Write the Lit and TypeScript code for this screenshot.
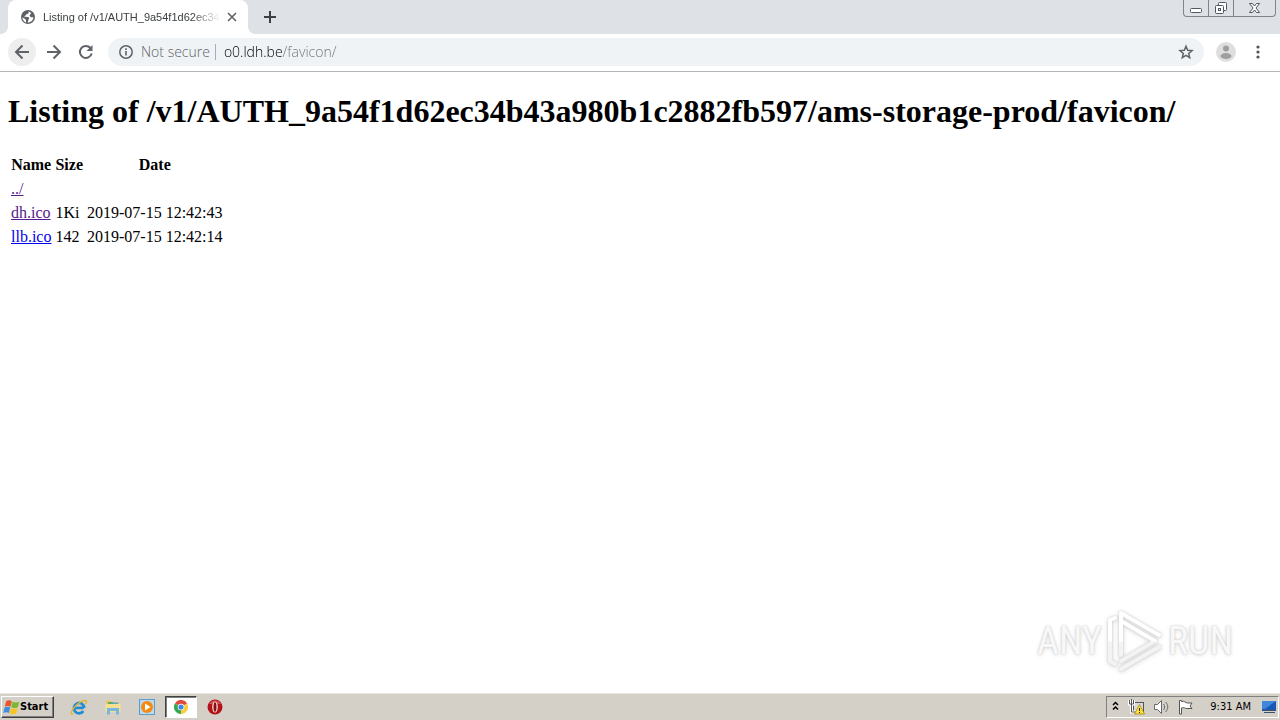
import { LitElement, html, css, svg } from "lit";
import { customElement } from "lit/decorators.js";

interface Entry {
  name: string;
  size: string;
  date: string;
  visited: boolean;
}

const PATH = "/v1/AUTH_9a54f1d62ec34b43a980b1c2882fb597/ams-storage-prod/favicon/";

const ENTRIES: Entry[] = [
  { name: "../", size: "", date: "", visited: true },
  { name: "dh.ico", size: "1Ki", date: "2019-07-15 12:42:43", visited: true },
  { name: "llb.ico", size: "142", date: "2019-07-15 12:42:14", visited: false },
];

@customElement("browser-tabs")
class BrowserTabs extends LitElement {
  static styles = css`
    :host { display: flex; align-items: stretch; height: 34px; background: #dee1e6; font-family: "Liberation Sans", sans-serif; }
    button { border: 0; background: none; padding: 0; margin: 0; color: inherit; }
    svg { display: block; }
    .tab { position: relative; display: flex; align-items: center; width: 240px; box-sizing: border-box; padding: 0 8px 0 12px; margin-left: 8px; background: #fff; border-radius: 8px 8px 0 0; }
    .tab::before, .tab::after { content: ""; position: absolute; bottom: 0; width: 8px; height: 8px; }
    .tab::before { left: -8px; background: radial-gradient(circle at 0 0, transparent 8px, #fff 8px); }
    .tab::after { right: -8px; background: radial-gradient(circle at 100% 0, transparent 8px, #fff 8px); }
    .title { flex: 1; overflow: hidden; white-space: nowrap; margin: 0 4px 0 7px; font-size: 11px; line-height: 16px; color: #3c4043; mask-image: linear-gradient(90deg, #000 calc(100% - 28px), transparent); }
    .close, .add { display: grid; place-items: center; width: 16px; height: 16px; }
    .add { align-self: center; margin-left: 14px; }
    .caption { display: flex; margin-left: auto; margin-right: 4px; height: 17px; box-sizing: border-box; border: 1px solid #80858d; border-top: 0; border-radius: 0 0 4px 4px; }
    .caption button { display: grid; place-items: center; width: 25px; border-right: 1px solid #80858d; }
    .caption button:last-child { width: 41px; border: 0; }
  `;
  render() {
    return html`
      <div class="tab">
        <svg width="16" height="16" viewBox="0 0 16 16"><circle cx="8" cy="8" r="7" fill="#5f6368" /><path d="M8.500 2.500C9.200 4 8 5.200 6.500 5.300c-.800 1.200-1.900 1.900-2.300 2.400l4 .3c1.200.6 1 1.800.3 2.500l-.8 3c3.200-.2 5.700-2.400 5.700-5.300h-2.700l-1.200-2 1.700-1.900C10.500 3.300 9.500 2.700 8.500 2.500zM2.300 8.500c.2 2.500 1.700 4.200 3.700 4.900V11L4.500 9.500z" fill="#fff" /></svg>
        <span class="title">Listing of ${PATH}</span>
        <button class="close" aria-label="Close tab"><svg width="10" height="10" viewBox="0 0 10 10"><path d="M1 1l8 8M9 1L1 9" stroke="#5f6368" stroke-width="1.600" /></svg></button>
      </div>
      <button class="add" aria-label="New tab"><svg width="12" height="12" viewBox="0 0 12 12"><path d="M6 0v12M0 6h12" stroke="#3c4043" stroke-width="2" /></svg></button>
      <div class="caption">
        <button aria-label="Minimize"><svg width="25" height="16" viewBox="0 0 25 16"><rect x="6.500" y="8.500" width="11" height="4" rx="1" fill="#fff" stroke="#535761" /></svg></button>
        <button aria-label="Restore"><svg width="25" height="16" viewBox="0 0 25 16" fill="#fff" stroke="#535761"><rect x="9.500" y="2.500" width="8" height="8" rx="1" /><rect x="6.500" y="5.500" width="8" height="8" rx="1" /><rect x="9.500" y="8.500" width="2" height="2" /></svg></button>
        <button aria-label="Close"><svg width="41" height="16" viewBox="0 0 41 16"><path d="M15.500 3.500h3l2 2.500 2-2.500h3l-3.500 4.500 3.500 4.500h-3l-2-2.500-2 2.500h-3l3.500-4.500z" fill="#fff" stroke="#535761" /></svg></button>
      </div>`;
  }
}

@customElement("browser-toolbar")
class BrowserToolbar extends LitElement {
  static styles = css`
    :host { display: flex; align-items: center; height: 36px; padding: 0 8px 1px; background: #fff; border-bottom: 1px solid #b3b5b6; font-family: "Open Sans", sans-serif; }
    button { display: grid; place-items: center; border: 0; background: none; padding: 0; width: 28px; height: 28px; margin-right: 4px; border-radius: 50%; }
    .back { background: #eeeeee; }
    .omnibox { flex: 1; display: flex; align-items: center; height: 28px; margin: 0 8px 0 4px; padding-left: 10px; border-radius: 14px; background: #f0f3f5; font-size: 14px; color: #5f6368; }
    .status { font-weight: 300; margin-left: 7px; padding-right: 5px; border-right: 1px solid #a9acb0; line-height: 16px; }
    input { flex: 1; min-width: 0; border: 0; outline: 0; padding: 0 0 0 8px; font: inherit; font-weight: 300; line-height: 20px; color: transparent; background: linear-gradient(90deg, #000 66px, #6d7175 66px) text; -webkit-background-clip: text; }
    .star { margin: 0 4px 0 0; }
    .more { margin: 0; }
    .profile { margin-right: 4px; }
  `;
  render() {
    return html`
      <button class="back" aria-label="Back"><svg width="16" height="16" viewBox="0 0 16 16" fill="none" stroke="#5f6368" stroke-width="2"><path d="M15 8H2M8.500 1.500L2 8l6.500 6.500" /></svg></button>
      <button aria-label="Forward"><svg width="16" height="16" viewBox="0 0 16 16" fill="none" stroke="#5f6368" stroke-width="2"><path d="M1 8h13M7.500 1.500L14 8l-6.500 6.500" /></svg></button>
      <button aria-label="Reload"><svg width="16" height="16" viewBox="0 0 16 16"><path d="M13.700 9.500A6 6 0 1 1 12.300 3.800" fill="none" stroke="#5f6368" stroke-width="2" /><path d="M14.500 1v6h-6z" fill="#5f6368" /></svg></button>
      <div class="omnibox">
        <svg width="16" height="16" viewBox="0 0 16 16"><circle cx="8" cy="8" r="6.200" fill="none" stroke="#5f6368" stroke-width="1.500" /><path d="M8 7v4.500M8 4.300v1.600" stroke="#5f6368" stroke-width="1.600" /></svg>
        <span class="status">Not secure</span>
        <input aria-label="Address" value="o0.ldh.be/favicon/" />
        <button class="star" aria-label="Bookmark"><svg width="16" height="16" viewBox="0 0 16 16"><path d="M8 2.200l1.700 4 4.300.400-3.300 2.800 1 4.200L8 11.400l-3.700 2.200 1-4.200L2 6.600l4.300-.400z" fill="none" stroke="#5f6368" stroke-width="1.500" /></svg></button>
      </div>
      <button class="profile" aria-label="Profile"><svg width="20" height="20" viewBox="0 0 20 20"><circle cx="10" cy="10" r="10" fill="#dedede" /><circle cx="10" cy="6.500" r="3" fill="#9e9e9e" /><ellipse cx="10" cy="14" rx="5.500" ry="3" fill="#9e9e9e" /></svg></button>
      <button class="more" aria-label="Menu"><svg width="4" height="14" viewBox="0 0 4 14" fill="#505357"><circle cx="2" cy="2" r="1.600" /><circle cx="2" cy="7" r="1.600" /><circle cx="2" cy="12" r="1.600" /></svg></button>`;
  }
}

@customElement("listing-page")
class ListingPage extends LitElement {
  static styles = css`
    :host { display: block; position: relative; padding: 0 8px; background: #fff; color: #000; font: 16px/20px "Liberation Serif", serif; }
    h1 { margin: 21px 0 23px; font-size: 32px; line-height: 36px; white-space: nowrap; }
    table { border-spacing: 2px; }
    th, td { padding: 1px; height: 20px; }
    td.size { text-align: left; }
    td.date { text-align: right; }
    a { color: #0000ee; }
    a.visited { color: #551a8b; }
    .watermark { position: absolute; right: 47px; bottom: 20px; display: flex; align-items: center; gap: 5px; font: 38px/64px "Roboto Condensed", "Liberation Sans Narrow", sans-serif; color: #f8f8f8; text-shadow: 0 0 2px #c8c8c8, 0 1px 4px #d8d8d8; }
    .play { filter: drop-shadow(0 0 1px #cccccc) drop-shadow(0 1px 2px #dcdcdc); }
  `;
  render() {
    return html`
      <h1>Listing of ${PATH}</h1>
      <table>
        <thead><tr><th>Name</th><th>Size</th><th>Date</th></tr></thead>
        <tbody>
          ${ENTRIES.map((e) => html`<tr>
            <td><a class=${e.visited ? "visited" : "fresh"} href="#">${e.name}</a></td>
            <td class="size">${e.size}</td>
            <td class="date">${e.date}</td>
          </tr>`)}
        </tbody>
      </table>
      <div class="watermark">
        <span>ANY</span>
        <svg class="play" width="56" height="64" viewBox="0 0 56 64" fill="none" stroke-width="4" stroke-linejoin="round" stroke-linecap="round">
          <defs><linearGradient id="fade" gradientUnits="userSpaceOnUse" x1="0" y1="0" x2="0" y2="64"><stop offset=".5" stop-color="#fff" /><stop offset=".52" stop-color="#f3f3f3" /></linearGradient></defs>
          <path stroke="url(#fade)" d="M8 9L3 11v41l5 3M14 46V4l38 22M14 12l34 20M14 52l34-20M14 60l38-22" />
        </svg>
        <span>RUN</span>
      </div>`;
  }
}

const windowsFlag = svg`<svg width="17" height="17" viewBox="0 0 16 16"><path d="M3 2c2-1.200 3.500-1 5.300 0L7 7.300c-1.700-1-3.400-1-5.300 0z" fill="#e8562a" /><path d="M9 2.500c2 1 3.700 1 6.300 0L14 7.800c-2 1-4.200 1-6.300 0z" fill="#7cb82f" /><path d="M1.500 8c2-1 3.500-1 5.300 0l-1.300 5.200c-1.700-1-3.400-1-5.300 0z" fill="#3d8ede" /><path d="M7.500 8.500c2 1 4.200 1 6.300 0l-1.300 5.200c-2 1-4.200 1-6.300 0z" fill="#f8c523" /></svg>`;

@customElement("task-bar")
class TaskBar extends LitElement {
  static styles = css`
    :host { display: flex; align-items: center; height: 26px; padding: 0 1px; background: #d4d0c8; border-top: 1px solid #e8e6e0; box-shadow: 0 -1px 0 #d4d0c8; font: 11px/14px "DejaVu Sans Condensed", sans-serif; color: #000; }
    button { border: 0; background: none; padding: 0; color: inherit; font: inherit; display: grid; place-items: center; }
    svg { display: block; }
    .start { display: flex; align-items: center; width: 53px; height: 22px; padding-left: 1px; font: bold 11px/14px "DejaVu Sans Condensed", sans-serif; border: 1px solid; border-color: #fff #404040 #404040 #fff; box-shadow: inset -1px -1px #808080; box-sizing: border-box; }
    .apps { display: flex; margin-left: 9px; gap: 2px; }
    .apps button { width: 32px; height: 22px; box-sizing: border-box; border: 1px solid transparent; }
    .apps .active { background: #fff; border-color: #404040 #fff #fff #404040; box-shadow: inset 1px 1px #808080; }
    .tray { display: flex; align-items: center; gap: 8px; margin-left: auto; height: 22px; padding: 0 1px 0 4px; box-sizing: border-box; border: 1px solid; border-color: #808080 #fff #fff #808080; }
    time { margin: 0 2px 0 8px; }
  `;
  render() {
    return html`
      <button class="start">${windowsFlag}<span>Start</span></button>
      <div class="apps">
        <button aria-label="Internet Explorer"><svg width="18" height="18" viewBox="0 0 18 18" fill="none"><path d="M13.800 9.900H5.200M14.300 9.900a5.200 5.200 0 1 0-1 3.300" stroke="#218bd4" stroke-width="2.800" /><path d="M3.500 15.500C0 18 .5 13 5 8.500S16.500.5 16.500 3.500c0 1-.5 2-1 2.500" stroke="#e3b52d" stroke-width="1.400" /></svg></button>
        <button aria-label="Explorer"><svg width="16" height="16" viewBox="0 0 16 16"><path d="M1 1.500h5l1 1.500h7v9H1z" fill="#e9c765" /><path d="M3 3h5v2H3z" fill="#58ad67" /><path d="M8 3.500h5v1.500H8z" fill="#5fa5d8" /><path d="M.5 5h15v8H.5z" fill="#f7df91" /><path d="M2 15.500V9h12v6.500h-3V12H5v3.500z" fill="#76b7df" /></svg></button>
        <button aria-label="Media Player"><svg width="16" height="16" viewBox="0 0 16 16"><rect x=".5" y=".5" width="15" height="15" fill="#b9dbf2" stroke="#5e9ccc" /><circle cx="8" cy="8" r="6" fill="#f58a12" /><path d="M6 4.500v7L11.500 8z" fill="#fff" /></svg></button>
        <button class="active" aria-label="Chrome"><svg width="14" height="14" viewBox="0 0 14 14"><path d="M7 7L.9 3.500A7 7 0 0 1 13.100 3.500z" fill="#e14a3b" /><path d="M7 7l6.100-3.500A7 7 0 0 1 7 14z" fill="#f9ce3a" /><path d="M7 7v7A7 7 0 0 1 .9 3.500z" fill="#3aa757" /><circle cx="7" cy="7" r="3.300" fill="#fff" /><circle cx="7" cy="7" r="2.600" fill="#4285e4" /></svg></button>
        <button aria-label="Opera"><svg width="16" height="16" viewBox="0 0 16 16"><circle cx="8" cy="8" r="7.500" fill="#b51218" /><path d="M2 5a7 7 0 0 1 12 0z" fill="#d0504d" /><ellipse cx="8" cy="8" rx="2.800" ry="5.500" fill="#f4e4e4" /><ellipse cx="8" cy="8" rx="1.500" ry="4.700" fill="#8c0d12" /></svg></button>
      </div>
      <div class="tray">
        <svg width="9" height="14" viewBox="0 0 9 14" fill="none" stroke="#000" stroke-width="1.500"><path d="M2 5l2.500-2.500L7 5M2 9.500L4.500 7 7 9.500" /></svg>
        <svg width="17" height="16" viewBox="0 0 17 16"><rect x="5.500" y="3.500" width="10" height="9" fill="#d8d8d8" stroke="#555" /><path d="M1.500 1v4h4V1M3.500 5v8h5" fill="none" stroke="#fff" stroke-width="3" /><path d="M1.500 1v4h4V1M3.500 0v13h5" fill="none" stroke="#555" /><path d="M11.500 5.500l5 9.500h-10z" fill="#ffe13a" stroke="#9b8000" stroke-width=".700" /><path d="M11.500 9v3M11.500 13v1" stroke="#222" /></svg>
        <svg width="16" height="16" viewBox="0 0 16 16" fill="none" stroke="#686868"><path d="M1.500 5.500h3l4-4v13l-4-4h-3z" fill="#fff" /><path d="M10.500 5c1.500 2 1.500 4 0 6M12.500 3c3 3 3 7 0 10" /></svg>
        <svg width="17" height="16" viewBox="0 0 17 16"><path d="M2.500 15V1.500h2v1c3-1 4 1.500 6 1.500h4.500l-2 3 2 2.500h-5c-2 0-3-1.500-5.500-.5v6z" fill="#fff" stroke="#555" /></svg>
        <time>9:31 AM</time>
        <svg width="16" height="14" viewBox="0 0 16 14"><path d="M1 1h14v9H1z" fill="#1759b5" /><path d="M1 1h14L4 9H1z" fill="#3f86dc" /><path d="M1 10.500h14M3 12.500h11" stroke="#38516e" /></svg>
      </div>`;
  }
}

@customElement("app-root")
class AppRoot extends LitElement {
  static styles = css`
    :host { display: flex; flex-direction: column; min-height: 100vh; overflow: hidden; }
    listing-page { flex: 1; }
  `;
  render() {
    return html`<browser-tabs></browser-tabs><browser-toolbar></browser-toolbar><listing-page></listing-page><task-bar></task-bar>`;
  }
}
